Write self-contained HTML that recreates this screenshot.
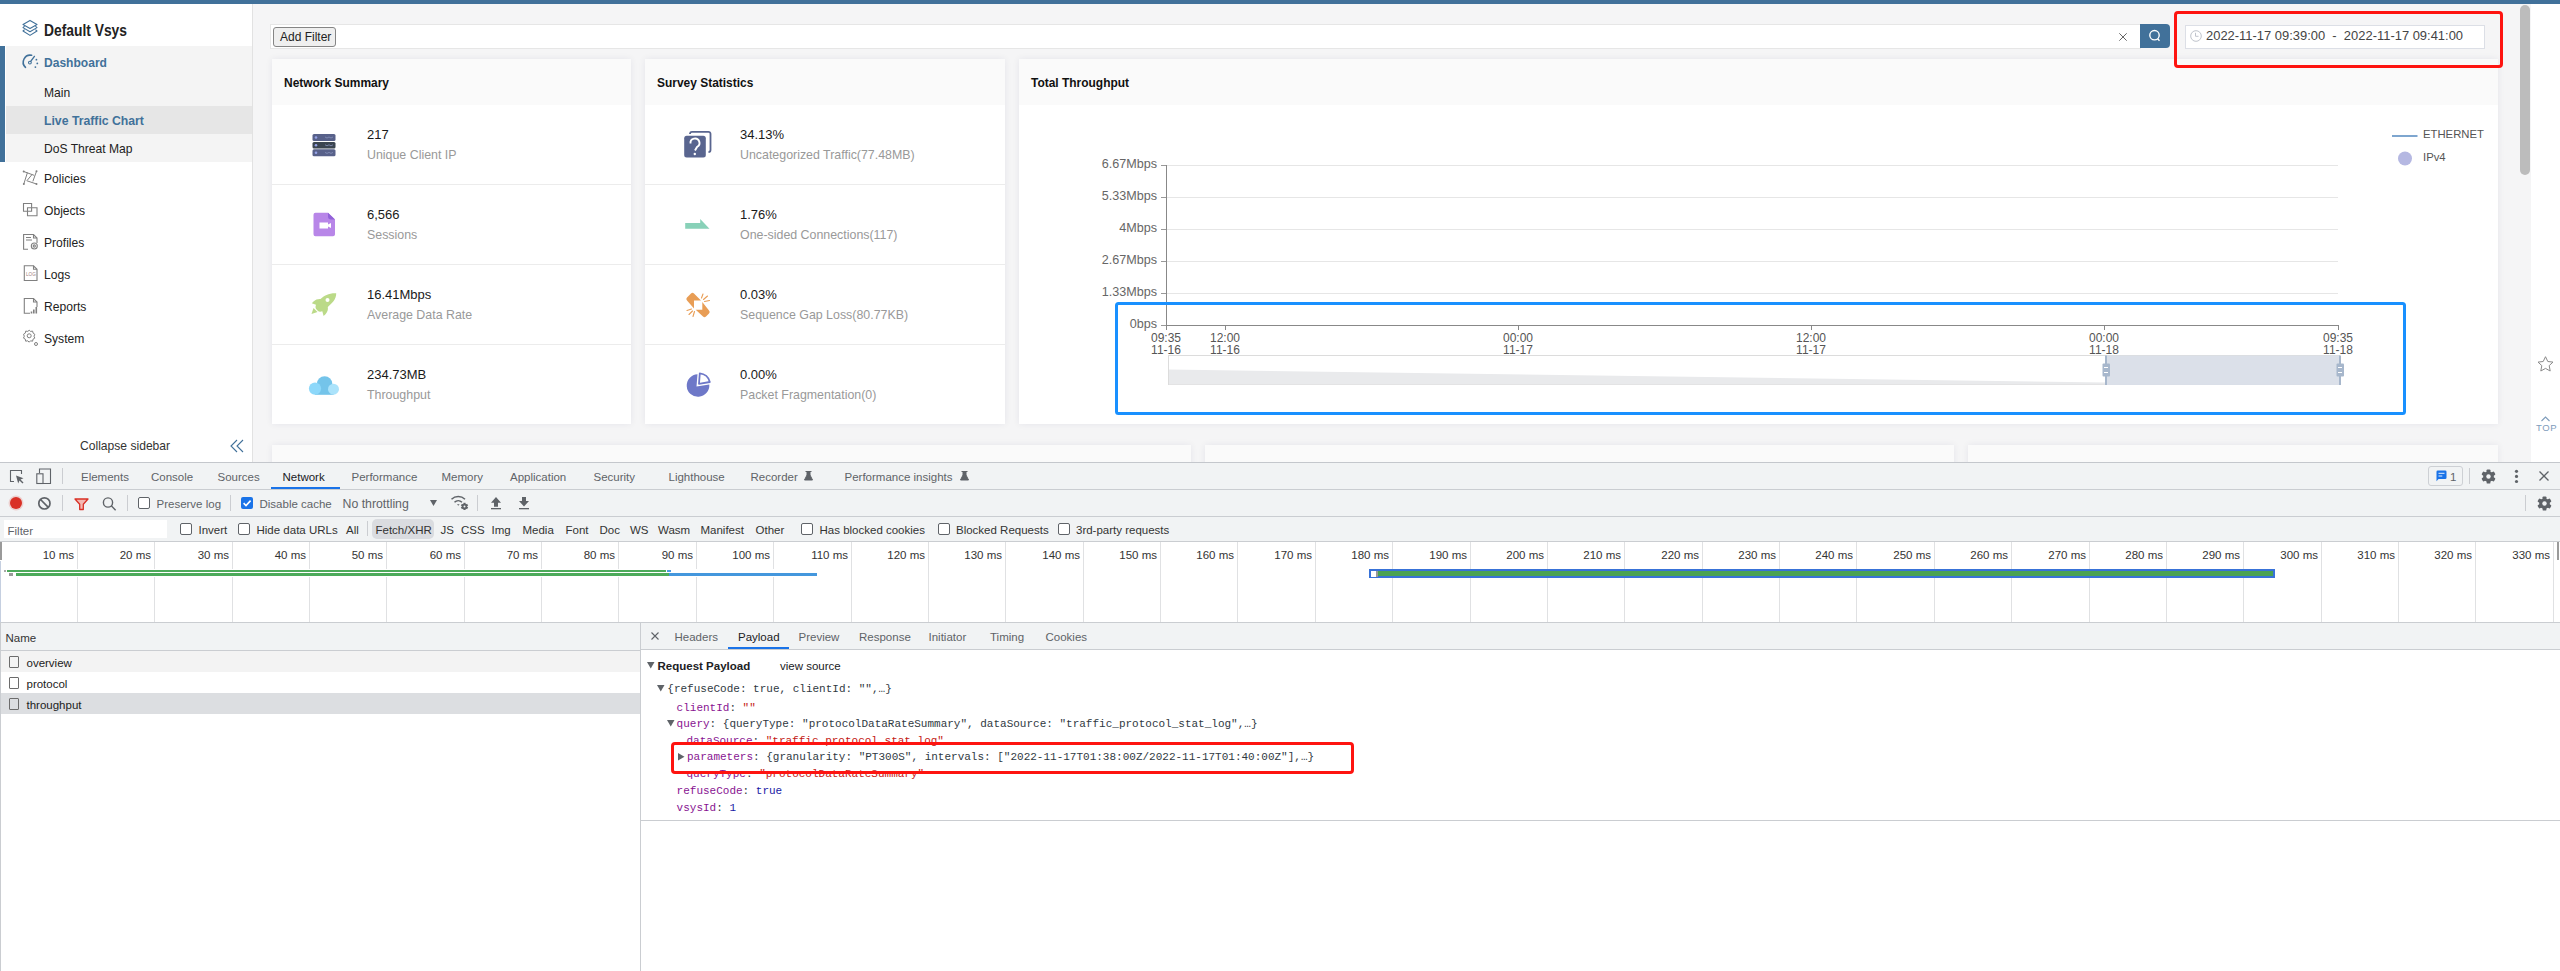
<!DOCTYPE html>
<html><head><meta charset="utf-8">
<style>
*{box-sizing:border-box;margin:0;padding:0}
html,body{width:2560px;height:971px;overflow:hidden;background:#fff;font-family:"Liberation Sans",sans-serif;color:#222}
.a{position:absolute}
.t{position:absolute;white-space:pre;line-height:20px;height:20px}
svg{position:absolute;overflow:visible}
/* app */
#topbar{left:0;top:0;width:2560px;height:4px;background:#41719a}
#side{left:0;top:4px;width:253px;height:458px;background:#fff;border-right:1px solid #e2e2e2}
#main{left:253px;top:4px;width:2278px;height:458px;background:#f5f5f6}
.card{position:absolute;background:#fff;box-shadow:0 0 7px rgba(30,30,80,0.07)}
.chead{position:absolute;left:0;top:0;right:0;height:46px;background:#fafafa}
.row{position:absolute;left:0;right:0;height:80px;border-top:1px solid #ececec}
.num{font-size:13px;color:#1a1a1a}
.lbl{font-size:12.4px;color:#999}
.side-t{font-size:12.1px;color:#222}
/* devtools */
#dev{left:0;top:462px;width:2560px;height:509px;background:#f1f3f4;border-top:1px solid #cbcdd1}
.dt{font-size:11.5px;color:#4d4d4d}
.cb{position:absolute;width:12px;height:12px;border:1px solid #5f6368;border-radius:2px;background:#fff}
.vsep{position:absolute;width:1px;background:#cbcdd1}
.mono{font-family:"Liberation Mono",monospace;font-size:11px;line-height:17px;height:17px}
</style></head><body>
<div id="topbar" class="a"></div>
<div id="side" class="a"></div>
<!-- sidebar -->
<svg style="left:22px;top:20px" width="16" height="16" viewBox="0 0 16 16" fill="none" stroke="#41719a" stroke-width="1.1" stroke-linejoin="round"><path d="M8 0.4L15 4.4L8 8.4L1 4.4Z"/><path d="M2.6 6.2L1 7.6L8 11.8L15 7.6L13.4 6.2"/><path d="M2.6 9.6L1 11L8 15.4L15 11L13.4 9.6"/></svg>
<div class="t" style="left:44px;top:20.5px;font-size:15.8px;font-weight:bold;color:#222;transform:scaleX(0.875);transform-origin:0 0">Default Vsys</div>
<div class="a" style="left:0;top:46px;width:5px;height:116px;background:#41719a"></div>
<div class="a" style="left:6px;top:46px;width:246px;height:116px;background:#f4f4f4"></div>
<div class="a" style="left:6px;top:106px;width:246px;height:28px;background:#e6e6e6"></div>
<svg style="left:21px;top:54px" width="18" height="16" viewBox="0 0 18 16" fill="none" stroke="#41719a" stroke-width="1.6" stroke-linecap="round"><path d="M4.5 13.3A7 7 0 0 1 10.6 1.3"/><path d="M9.7 7.3L13.4 2.4" stroke-width="1.4"/><circle cx="8.9" cy="8.6" r="1.4" stroke-width="1.1"/><g fill="#41719a" stroke="none"><circle cx="15.4" cy="5.7" r="0.9"/><circle cx="16.3" cy="9.4" r="0.9"/><circle cx="14.4" cy="13.1" r="0.9"/></g></svg>
<div class="t side-t" style="left:44px;top:53px;font-weight:bold;color:#41719a;font-size:12.06px">Dashboard</div>
<div class="t side-t" style="left:44px;top:83px">Main</div>
<div class="t side-t" style="left:44px;top:111px;font-weight:bold;color:#41719a;font-size:12.24px">Live Traffic Chart</div>
<div class="t side-t" style="left:44px;top:139px">DoS Threat Map</div>
<!-- other menu -->
<svg style="left:20px;top:168px" width="20" height="20" viewBox="0 0 20 20" fill="none" stroke="#808080" stroke-width="1" stroke-linecap="round"><path d="M3.7 3.5L13.8 7.2M16.5 3.3L13 13M16.5 16L7 12.8M3.8 16L7.3 5M7.5 12L11.8 6.8"/><g fill="#808080" stroke="none"><circle cx="3.7" cy="3.5" r="1"/><circle cx="16.5" cy="3.3" r="1"/><circle cx="16.5" cy="16" r="1"/><circle cx="3.8" cy="16" r="1"/></g></svg>
<div class="t side-t" style="left:44px;top:169px">Policies</div>
<svg style="left:20px;top:200px" width="20" height="20" viewBox="0 0 20 20" fill="none" stroke="#808080" stroke-width="1.1"><path d="M7.5 11.3H3.5V3.5H11.6V7.7"/><path d="M11.6 7.7V11.3H7.5"/><path d="M7.5 7.7H17V15.8H7.5Z"/></svg>
<div class="t side-t" style="left:44px;top:201px">Objects</div>
<svg style="left:20px;top:232px" width="20" height="20" viewBox="0 0 20 20" fill="none" stroke="#808080" stroke-width="1.1"><path d="M8 17.3H3.6V2.5H13.5L17 6V11"/><path d="M13.5 2.5V6H17"/><path d="M6 5.5H11M6 8H12"/><circle cx="14.3" cy="14" r="3"/><circle cx="14.3" cy="14" r="1.1"/></svg>
<div class="t side-t" style="left:44px;top:233px">Profiles</div>
<svg style="left:20px;top:264px" width="20" height="20" viewBox="0 0 20 20" fill="none" stroke="#808080" stroke-width="1.1"><path d="M4.3 1.8H13.5L17 5.3V16.5H4.3Z"/><path d="M13.5 1.8V5.3H17"/><text x="6" y="12" font-size="4.6" fill="#a08080" stroke="none" font-family="Liberation Sans">LOG</text></svg>
<div class="t side-t" style="left:44px;top:265px">Logs</div>
<svg style="left:20px;top:296px" width="20" height="20" viewBox="0 0 20 20" fill="none" stroke="#808080" stroke-width="1.1"><path d="M10 17.3H4.3V2.5H13.5L17 6V11"/><path d="M13.5 2.5V6H17"/><path d="M11.5 17.5V15.5M13.8 17.5V13.5M16.3 17.5V11" stroke-width="1.6"/></svg>
<div class="t side-t" style="left:44px;top:297px">Reports</div>
<svg style="left:20px;top:328px" width="20" height="20" viewBox="0 0 20 20" fill="none" stroke="#808080" stroke-width="1"><circle cx="9.2" cy="7.8" r="2"/><path d="M9.2 2.2L10.5 3.4L12.6 3.1L13.1 5.1L14.8 6.3L14 8.2L14.8 10.1L13 11.2L12.6 13.2L10.5 12.8L9.2 14.2L7.8 12.8L5.7 13.2L5.3 11.2L3.5 10.1L4.3 8.2L3.5 6.3L5.3 5.1L5.7 3.1L7.8 3.4Z"/><circle cx="16" cy="16" r="1.5"/></svg>
<div class="t side-t" style="left:44px;top:329px">System</div>
<div class="t side-t" style="left:80px;top:436px;color:#333">Collapse sidebar</div>
<svg style="left:230px;top:439px" width="14" height="14" viewBox="0 0 14 14" fill="none" stroke="#41719a" stroke-width="1.1"><path d="M7 1L1 7L7 13M13 1L7 7L13 13"/></svg>
<div id="main" class="a"></div>
<div class="a" style="left:2531px;top:4px;width:28px;height:458px;background:#fff"></div>
<div class="a" style="left:2520px;top:5px;width:10px;height:170px;background:#bcbcbc;border-radius:5px"></div>
<!-- filter bar -->
<div class="a" style="left:270px;top:24px;width:1871px;height:25px;background:#fff;border:1px solid #e6e6e6;border-right:none"></div>
<div class="a" style="left:273px;top:27px;width:63px;height:20px;background:#efefef;border:1.5px solid #858585;border-radius:3px"></div>
<div class="t" style="left:280px;top:27px;font-size:12px;color:#222">Add Filter</div>
<svg style="left:2119px;top:33px" width="8" height="8" viewBox="0 0 8 8" stroke="#666" stroke-width="1"><path d="M0.3 0.3L7.7 7.7M7.7 0.3L0.3 7.7"/></svg>
<div class="a" style="left:2140px;top:24px;width:30px;height:24px;background:#41719a;border-radius:0 4px 4px 0"></div>
<svg style="left:2148px;top:29px" width="14" height="14" viewBox="0 0 14 14" fill="none" stroke="#fff" stroke-width="1.4"><circle cx="6.5" cy="6.2" r="4.7"/><path d="M9.6 9.8L11.5 11.8"/></svg>
<!-- date range -->
<div class="a" style="left:2185px;top:25px;width:300px;height:24px;background:#fff;border:1px solid #dcdfe6"></div>
<svg style="left:2190px;top:30px" width="12" height="12" viewBox="0 0 12 12" fill="none" stroke="#c0c4cc" stroke-width="1"><circle cx="6" cy="6" r="5.3"/><path d="M5.5 2.8V6.3H8.5"/></svg>
<div class="t" style="left:2206px;top:26px;font-size:12.94px;color:#444">2022-11-17 09:39:00  -  2022-11-17 09:41:00</div>

<!-- card 1 -->
<div class="card" style="left:272px;top:59px;width:359px;height:365px">
 <div class="chead"></div>
 <div class="row" style="top:125px"></div><div class="row" style="top:205px"></div><div class="row" style="top:285px"></div>
</div>
<div class="t" style="left:284px;top:73px;font-size:11.96px;font-weight:bold;color:#111">Network Summary</div>
<svg style="left:312px;top:134px" width="24" height="23" viewBox="0 0 24 23"><rect x="0.5" y="0" width="23" height="7" rx="1.5" fill="#58618a"/><rect x="0.5" y="8" width="23" height="6.5" rx="1.5" fill="#3b4550"/><rect x="0.5" y="15.3" width="23" height="7" rx="1.5" fill="#58618a"/><circle cx="4" cy="3.5" r="1.3" fill="#95a2e6"/><circle cx="4" cy="11.2" r="1.3" fill="#95a2e6"/><circle cx="4" cy="18.8" r="1.3" fill="#95a2e6"/><path d="M13 3L15 4L17 3L19 4L21 3M13 10.8L15 11.8L17 10.8L19 11.8L21 10.8M13 18.4L15 19.4L17 18.4L19 19.4L21 18.4" stroke="#8892bb" stroke-width="0.8" fill="none"/></svg>
<div class="t num" style="left:367px;top:125px">217</div>
<div class="t lbl" style="left:367px;top:145px">Unique Client IP</div>
<svg style="left:313px;top:212px" width="23" height="25" viewBox="0 0 23 25"><path d="M2.5 0.8H15L22 7.5V22.5A2 2 0 0 1 20 24.3H2.5A2 2 0 0 1 0.5 22.3V2.8A2 2 0 0 1 2.5 0.8Z" fill="#b886e8"/><path d="M15 0.8L22 7.5H18A3 3 0 0 1 15 4.5Z" fill="#9262d8"/><rect x="6.5" y="10.5" width="8.5" height="6" fill="#fff"/><path d="M15 12.5L18 11V16L15 14.5Z" fill="#fff"/></svg>
<div class="t num" style="left:367px;top:205px">6,566</div>
<div class="t lbl" style="left:367px;top:225px">Sessions</div>
<svg style="left:311px;top:292px" width="26" height="25" viewBox="0 0 26 25"><path d="M25.2 1.2C18.5 0.8 13 3.5 9.5 7C7 6.8 4.5 7.5 2.5 9.5L0.8 11.2L5 12.8C4.2 14.8 4.4 16.4 5.8 17.8L6.5 18.5C7.9 19.9 9.4 20.1 11.3 19.3L12.6 24L14.5 22.2C16.5 20.2 17.3 17.6 16.8 15C21 11.2 25.5 7 25.2 1.2Z" fill="#bbda88"/><circle cx="16.5" cy="8" r="2" fill="#fff"/><path d="M2.5 16L6.5 20L0.5 22Z" fill="#bbda88"/></svg>
<div class="t num" style="left:367px;top:285px">16.41Mbps</div>
<div class="t lbl" style="left:367px;top:305px">Average Data Rate</div>
<svg style="left:309px;top:376px" width="30" height="19" viewBox="0 0 30 19"><circle cx="15.6" cy="8" r="7.8" fill="#74c4ea"/><rect x="6" y="12" width="18.7" height="6.8" fill="#74c4ea"/><circle cx="6" cy="12.6" r="6.1" fill="#8dd8fa"/><circle cx="24.5" cy="13.2" r="5.5" fill="#abe3fb"/></svg>
<div class="t num" style="left:367px;top:365px">234.73MB</div>
<div class="t lbl" style="left:367px;top:385px">Throughput</div>
<!-- card 2 -->
<div class="card" style="left:645px;top:59px;width:360px;height:365px">
 <div class="chead"></div>
 <div class="row" style="top:125px"></div><div class="row" style="top:205px"></div><div class="row" style="top:285px"></div>
</div>
<div class="t" style="left:657px;top:73px;font-size:11.96px;font-weight:bold;color:#111">Survey Statistics</div>
<svg style="left:684px;top:131px" width="27" height="27" viewBox="0 0 27 27"><path d="M6 3V2.5A2 2 0 0 1 8 0.8H24.5A2 2 0 0 1 26.5 2.8V19A2 2 0 0 1 24.5 21" fill="none" stroke="#59658f" stroke-width="1.8"/><rect x="0.2" y="4.8" width="21.6" height="21.8" rx="2.5" fill="#59658f"/><path d="M6.5 12.5A4.5 4.5 0 1 1 13 16L11 19.5" fill="none" stroke="#fff" stroke-width="1.9"/><circle cx="10.8" cy="23" r="1.2" fill="#fff"/></svg>
<div class="t num" style="left:740px;top:125px">34.13%</div>
<div class="t lbl" style="left:740px;top:145px">Uncategorized Traffic(77.48MB)</div>
<svg style="left:685px;top:219px" width="25" height="10" viewBox="0 0 25 10"><path d="M0.2 4H15.2V0L24.5 9.7H0.2Z" fill="#88d1b8"/></svg>
<div class="t num" style="left:740px;top:205px">1.76%</div>
<div class="t lbl" style="left:740px;top:225px">One-sided Connections(117)</div>
<svg style="left:678px;top:285px" width="40" height="40" viewBox="0 0 40 40"><path d="M9 12.5L13 8.5Q14.5 7 16 8.5L23 15.5H16V23.5L9 15.5Q7.5 14 9 12.5Z" fill="#e89d55"/><path d="M24.3 17V24.7H17.7L25 31.5Q26.5 33 28 31.5L31 28.5Q32.5 27 31 25.5Z" fill="#e89d55"/><path d="M23.5 13L25 9M25.5 14.5L29.5 11M26.5 16.5L31.5 15.5M9 25.5L13.5 24M11 29.5L14.5 26M15 31.5L16.5 26.5" stroke="#e89d55" stroke-width="1.1" stroke-linecap="round"/></svg>
<div class="t num" style="left:740px;top:285px">0.03%</div>
<div class="t lbl" style="left:740px;top:305px">Sequence Gap Loss(80.77KB)</div>
<svg style="left:678px;top:365px" width="40" height="40" viewBox="0 0 40 40"><path d="M19.5 9.2A11.3 11.3 0 1 0 31.3 19.6L18.5 21.5Z" fill="#6e78c8"/><path d="M21.8 8.3A11.3 11.3 0 0 1 31.8 17L21 18.8Z" fill="none" stroke="#6e78c8" stroke-width="1.8" stroke-linejoin="round"/></svg>
<div class="t num" style="left:740px;top:365px">0.00%</div>
<div class="t lbl" style="left:740px;top:385px">Packet Fragmentation(0)</div>
<!-- card 3 chart -->
<div class="card" style="left:1019px;top:59px;width:1479px;height:365px"><div class="chead"></div></div>
<div class="t" style="left:1031px;top:73px;font-size:11.96px;font-weight:bold;color:#111">Total Throughput</div>
<svg style="left:0;top:0" width="2560" height="462" viewBox="0 0 2560 462"><path d="M1167 165.5H2338" stroke="#e6e6e6" stroke-width="1"/><path d="M1167 197.5H2338" stroke="#e6e6e6" stroke-width="1"/><path d="M1167 229.5H2338" stroke="#e6e6e6" stroke-width="1"/><path d="M1167 261.5H2338" stroke="#e6e6e6" stroke-width="1"/><path d="M1167 293.5H2338" stroke="#e6e6e6" stroke-width="1"/><path d="M1161 165.5H1166" stroke="#999" stroke-width="1"/><path d="M1161 197.5H1166" stroke="#999" stroke-width="1"/><path d="M1161 229.5H1166" stroke="#999" stroke-width="1"/><path d="M1161 261.5H1166" stroke="#999" stroke-width="1"/><path d="M1161 293.5H1166" stroke="#999" stroke-width="1"/><path d="M1161 325.5H1166" stroke="#999" stroke-width="1"/><path d="M1166.5 165V330" stroke="#888" stroke-width="1"/><path d="M1166 325.5H2338.5" stroke="#888" stroke-width="1"/><path d="M1166.5 325V330" stroke="#888" stroke-width="1"/><path d="M1225.5 325V330" stroke="#888" stroke-width="1"/><path d="M1518.5 325V330" stroke="#888" stroke-width="1"/><path d="M1811.5 325V330" stroke="#888" stroke-width="1"/><path d="M2104.5 325V330" stroke="#888" stroke-width="1"/><path d="M2338.5 325V330" stroke="#888" stroke-width="1"/><rect x="1168.5" y="355.5" width="1171" height="29" fill="#fff" stroke="#dcdcdc" stroke-width="1"/><path d="M1169 369.5L2106 382.5V384.5H1169Z" fill="#e9eaec"/><rect x="2106" y="355.5" width="234" height="29.5" fill="#d9dee8" fill-opacity="0.95"/><rect x="2105" y="355.5" width="2" height="29.5" fill="#a7b7cc"/><rect x="2102.5" y="363.5" width="7.5" height="13" rx="1" fill="#a7b7cc"/><path d="M2104 367.5H2108M2104 372.5H2108" stroke="#fff" stroke-width="1"/><rect x="2339" y="355.5" width="2" height="29.5" fill="#a7b7cc"/><rect x="2336.5" y="363.5" width="7.5" height="13" rx="1" fill="#a7b7cc"/><path d="M2338 367.5H2342M2338 372.5H2342" stroke="#fff" stroke-width="1"/><path d="M2392 136H2417.5" stroke="#7ea6cf" stroke-width="2"/><circle cx="2405" cy="158.5" r="7" fill="#b5b8e2"/><rect x="1116.5" y="303.5" width="1288" height="110" rx="2" fill="none" stroke="#1890ff" stroke-width="3"/></svg>
<div class="t" style="left:1057px;width:100px;text-align:right;top:154px;font-size:12.6px;color:#666">6.67Mbps</div>
<div class="t" style="left:1057px;width:100px;text-align:right;top:186px;font-size:12.6px;color:#666">5.33Mbps</div>
<div class="t" style="left:1057px;width:100px;text-align:right;top:218px;font-size:12.6px;color:#666">4Mbps</div>
<div class="t" style="left:1057px;width:100px;text-align:right;top:250px;font-size:12.6px;color:#666">2.67Mbps</div>
<div class="t" style="left:1057px;width:100px;text-align:right;top:282px;font-size:12.6px;color:#666">1.33Mbps</div>
<div class="t" style="left:1057px;width:100px;text-align:right;top:314px;font-size:12.6px;color:#666">0bps</div>
<div class="t" style="left:1126px;width:80px;text-align:center;top:332px;font-size:12px;line-height:12px;color:#555">09:35<br>11-16</div>
<div class="t" style="left:1185px;width:80px;text-align:center;top:332px;font-size:12px;line-height:12px;color:#555">12:00<br>11-16</div>
<div class="t" style="left:1478px;width:80px;text-align:center;top:332px;font-size:12px;line-height:12px;color:#555">00:00<br>11-17</div>
<div class="t" style="left:1771px;width:80px;text-align:center;top:332px;font-size:12px;line-height:12px;color:#555">12:00<br>11-17</div>
<div class="t" style="left:2064px;width:80px;text-align:center;top:332px;font-size:12px;line-height:12px;color:#555">00:00<br>11-18</div>
<div class="t" style="left:2298px;width:80px;text-align:center;top:332px;font-size:12px;line-height:12px;color:#555">09:35<br>11-18</div>
<div class="t" style="left:2423px;top:124px;font-size:11.3px;color:#555">ETHERNET</div>
<div class="t" style="left:2423px;top:147px;font-size:11.3px;color:#555">IPv4</div>
<div class="a" style="left:2174px;top:11px;width:329px;height:57px;border:3px solid #fe1410;border-radius:4px"></div>
<!-- next row cards -->
<div class="card" style="left:272px;top:445px;width:919px;height:30px;background:#fafafa"></div>
<div class="card" style="left:1205px;top:445px;width:749px;height:30px;background:#fafafa"></div>
<div class="card" style="left:1968px;top:445px;width:530px;height:30px;background:#fafafa"></div>
<svg style="left:2537px;top:356px" width="17" height="16" viewBox="0 0 17 16" fill="none" stroke="#8a8a8a" stroke-width="1" stroke-linejoin="round"><path d="M8.5 0.7L10.8 5.5L16 6.1L12.2 9.6L13.2 15L8.5 12.4L3.8 15L4.8 9.6L1 6.1L6.2 5.5Z"/></svg>
<svg style="left:2536px;top:416px" width="20" height="16" viewBox="0 0 20 16" fill="none" stroke="#7e9cbb" stroke-width="1.1"><path d="M5.5 5L9.5 1L13.5 5"/></svg>
<div class="t" style="left:2536px;top:418px;font-size:9.5px;line-height:20px;letter-spacing:0.6px;color:#7e9cbb">TOP</div>

<div id="dev" class="a"></div>
<div class="a" style="left:0;top:462px;width:2560px;height:1px;background:#c4c7cc"></div>
<div class="a" style="left:0;top:489px;width:2560px;height:1px;background:#cacdd1"></div>
<div class="a" style="left:0;top:516px;width:2560px;height:1px;background:#cacdd1"></div>
<div class="a" style="left:0;top:541px;width:2560px;height:1px;background:#cacdd1"></div>
<svg style="left:9px;top:469px" width="16" height="15" viewBox="0 0 16 15" fill="none" stroke="#5f6368" stroke-width="1.1"><path d="M5 12.5H1.5V1.5H12.5V5"/><path d="M7 6.5L14.5 9.2L11.5 10.5L14.5 13.5L13.5 14.5L10.5 11.5L9.2 14.5Z" fill="#5f6368" stroke="none"/></svg>
<svg style="left:36px;top:468px" width="16" height="16" viewBox="0 0 16 16" fill="none" stroke="#5f6368" stroke-width="1.1"><path d="M3.5 5V1H14.5V15.5H7"/><rect x="0.8" y="5.8" width="6.2" height="9.7"/></svg>
<div class="vsep" style="left:62px;top:468px;height:16px"></div>
<div class="t" style="left:81px;top:467px;font-size:11.5px;color:#5f6368;">Elements</div>
<div class="t" style="left:151px;top:467px;font-size:11.5px;color:#5f6368;">Console</div>
<div class="t" style="left:217.5px;top:467px;font-size:11.5px;color:#5f6368;">Sources</div>
<div class="t" style="left:282.5px;top:467px;font-size:11.5px;color:#202124;">Network</div>
<div class="t" style="left:351.5px;top:467px;font-size:11.5px;color:#5f6368;">Performance</div>
<div class="t" style="left:441.5px;top:467px;font-size:11.5px;color:#5f6368;">Memory</div>
<div class="t" style="left:510px;top:467px;font-size:11.5px;color:#5f6368;">Application</div>
<div class="t" style="left:593.5px;top:467px;font-size:11.5px;color:#5f6368;">Security</div>
<div class="t" style="left:668.5px;top:467px;font-size:11.5px;color:#5f6368;">Lighthouse</div>
<div class="t" style="left:750.5px;top:467px;font-size:11.5px;color:#5f6368;">Recorder</div>
<div class="t" style="left:844.5px;top:467px;font-size:11.5px;color:#5f6368;">Performance insights</div>
<div class="a" style="left:271px;top:487px;width:69px;height:2px;background:#1a73e8"></div>
<svg style="left:803.5px;top:471px" width="9" height="10" viewBox="0 0 9 10"><path d="M1.5 0.5H7.5M3 1V4L0.5 9H8.5L6 4V1" fill="#5f6368" stroke="#5f6368" stroke-width="1"/></svg>
<svg style="left:960px;top:471px" width="9" height="10" viewBox="0 0 9 10"><path d="M1.5 0.5H7.5M3 1V4L0.5 9H8.5L6 4V1" fill="#5f6368" stroke="#5f6368" stroke-width="1"/></svg>
<div class="a" style="left:2428px;top:466px;width:35px;height:20px;border:1px solid #cdd0d4;border-radius:3px"></div>
<svg style="left:2435.5px;top:470px" width="11" height="12" viewBox="0 0 11 12"><path d="M1.8 0.5H9.2A1.3 1.3 0 0 1 10.5 1.8V7.7A1.3 1.3 0 0 1 9.2 9H2.5L0.5 11.3V1.8A1.3 1.3 0 0 1 1.8 0.5Z" fill="#1a73e8"/><path d="M2.5 3.3H8.5M2.5 6H6.3" stroke="#fff" stroke-width="0.9"/></svg>
<div class="t" style="left:2450px;top:466.5px;font-size:11.5px;color:#5f6368;">1</div>
<div class="vsep" style="left:2469px;top:468px;height:16px"></div>
<svg style="left:2480.5px;top:468.5px" width="15" height="15" viewBox="0 0 15 15"><g transform="translate(7.5 7.5)" fill="#5f6368"><rect x="-1.9" y="-7.1" width="3.8" height="4" rx="0.9" transform="rotate(0)"/><rect x="-1.9" y="-7.1" width="3.8" height="4" rx="0.9" transform="rotate(60)"/><rect x="-1.9" y="-7.1" width="3.8" height="4" rx="0.9" transform="rotate(120)"/><rect x="-1.9" y="-7.1" width="3.8" height="4" rx="0.9" transform="rotate(180)"/><rect x="-1.9" y="-7.1" width="3.8" height="4" rx="0.9" transform="rotate(240)"/><rect x="-1.9" y="-7.1" width="3.8" height="4" rx="0.9" transform="rotate(300)"/><circle r="5.3"/><circle r="2.2" fill="#f1f3f4"/></g></svg>
<svg style="left:2514px;top:469px" width="5" height="15" viewBox="0 0 5 15" fill="#5f6368"><circle cx="2.5" cy="2.3" r="1.6"/><circle cx="2.5" cy="7.4" r="1.6"/><circle cx="2.5" cy="12.5" r="1.6"/></svg>
<svg style="left:2539px;top:471px" width="10" height="10" viewBox="0 0 10 10" stroke="#5f6368" stroke-width="1.3"><path d="M0.5 0.5L9.5 9.5M9.5 0.5L0.5 9.5"/></svg>
<svg style="left:7px;top:494px" width="18" height="18" viewBox="0 0 18 18"><circle cx="9" cy="9" r="7.5" fill="#d93025" fill-opacity="0.18"/><circle cx="9" cy="9" r="6" fill="#d93025"/></svg>
<svg style="left:37px;top:496px" width="15" height="15" viewBox="0 0 15 15" fill="none" stroke="#5f6368" stroke-width="1.7"><circle cx="7.4" cy="7.4" r="5.6"/><path d="M3.5 3.5L11.3 11.3"/></svg>
<div class="vsep" style="left:62px;top:495px;height:16px"></div>
<svg style="left:73.5px;top:497.5px" width="15" height="13" viewBox="0 0 15 13"><path d="M1 1H14L9.3 6.3V11.5H5.7V6.3Z" fill="#f4b8b2" stroke="#d93025" stroke-width="1.3" stroke-linejoin="round"/></svg>
<svg style="left:101px;top:496px" width="16" height="16" viewBox="0 0 16 16" fill="none" stroke="#5f6368" stroke-width="1.4"><circle cx="7" cy="6.5" r="4.6"/><path d="M10.3 9.8L14.6 14.2"/></svg>
<div class="vsep" style="left:127px;top:495px;height:16px"></div>
<div class="cb" style="left:138px;top:497px"></div>
<div class="t" style="left:156.5px;top:493.5px;font-size:11.5px;color:#5f6368;">Preserve log</div>
<div class="vsep" style="left:230px;top:495px;height:16px"></div>
<svg style="left:241px;top:497px" width="12" height="12" viewBox="0 0 12 12"><rect x="0" y="0" width="12" height="12" rx="2" fill="#1a73e8"/><path d="M2.6 6.2L5 8.5L9.6 3.6" fill="none" stroke="#fff" stroke-width="1.6"/></svg>
<div class="t" style="left:259.5px;top:493.5px;font-size:11.5px;color:#5f6368;">Disable cache</div>
<div class="t" style="left:342.5px;top:493.5px;font-size:12.3px;color:#5f6368;">No throttling</div>
<svg style="left:430px;top:500px" width="7" height="6" viewBox="0 0 7 6"><path d="M0 0H7L3.5 6Z" fill="#5f6368"/></svg>
<svg style="left:450px;top:495px" width="20" height="16" viewBox="0 0 20 16"><path d="M1.5 4.2A10 10 0 0 1 15 4.2M4.5 7.3A5.5 5.5 0 0 1 12 7.3" fill="none" stroke="#5f6368" stroke-width="1.5"/><path d="M7 9.3L8.3 10.8L9.6 9.3Z" fill="#5f6368"/><g transform="translate(14.5 11.4)" fill="#5f6368"><rect x="-1.1" y="-3.6" width="2.2" height="2" transform="rotate(0)"/><rect x="-1.1" y="-3.6" width="2.2" height="2" transform="rotate(60)"/><rect x="-1.1" y="-3.6" width="2.2" height="2" transform="rotate(120)"/><rect x="-1.1" y="-3.6" width="2.2" height="2" transform="rotate(180)"/><rect x="-1.1" y="-3.6" width="2.2" height="2" transform="rotate(240)"/><rect x="-1.1" y="-3.6" width="2.2" height="2" transform="rotate(300)"/><circle r="2.6"/><circle r="1" fill="#f1f3f4"/></g></svg>
<div class="vsep" style="left:477px;top:495px;height:16px"></div>
<svg style="left:490px;top:496px" width="12" height="14" viewBox="0 0 12 14" fill="#5f6368"><path d="M6 1L11 6.8H8V10.8H4V6.8H1Z"/><rect x="1" y="12" width="10" height="1.3"/></svg>
<svg style="left:518px;top:496px" width="12" height="14" viewBox="0 0 12 14" fill="#5f6368"><path d="M4 1H8V5.1H11L6 10.6L1 5.1H4Z"/><rect x="1" y="12" width="10" height="1.3"/></svg>
<div class="vsep" style="left:2525px;top:495px;height:16px"></div>
<svg style="left:2536.5px;top:495.5px" width="15" height="15" viewBox="0 0 15 15"><g transform="translate(7.5 7.5)" fill="#5f6368"><rect x="-1.9" y="-7.1" width="3.8" height="4" rx="0.9" transform="rotate(0)"/><rect x="-1.9" y="-7.1" width="3.8" height="4" rx="0.9" transform="rotate(60)"/><rect x="-1.9" y="-7.1" width="3.8" height="4" rx="0.9" transform="rotate(120)"/><rect x="-1.9" y="-7.1" width="3.8" height="4" rx="0.9" transform="rotate(180)"/><rect x="-1.9" y="-7.1" width="3.8" height="4" rx="0.9" transform="rotate(240)"/><rect x="-1.9" y="-7.1" width="3.8" height="4" rx="0.9" transform="rotate(300)"/><circle r="5.3"/><circle r="2.2" fill="#f1f3f4"/></g></svg>
<div class="a" style="left:4px;top:520px;width:163px;height:18px;background:#fff"></div>
<div class="t" style="left:7.5px;top:520.5px;font-size:11.5px;color:#5f6368;">Filter</div>
<div class="cb" style="left:180px;top:523px"></div>
<div class="t" style="left:198.5px;top:519.5px;font-size:11.5px;color:#333;">Invert</div>
<div class="cb" style="left:238px;top:523px"></div>
<div class="t" style="left:256.5px;top:519.5px;font-size:11.5px;color:#333;">Hide data URLs</div>
<div class="t" style="left:346px;top:519.5px;font-size:11.5px;color:#333;">All</div>
<div class="vsep" style="left:367px;top:521px;height:15px"></div>
<div class="a" style="left:372px;top:519px;width:62px;height:19.5px;background:#dadce0;border-radius:5px"></div>
<div class="t" style="left:375.5px;top:519.5px;font-size:11.5px;color:#333;">Fetch/XHR</div>
<div class="t" style="left:440.5px;top:519.5px;font-size:11.5px;color:#333;">JS</div>
<div class="t" style="left:461px;top:519.5px;font-size:11.5px;color:#333;">CSS</div>
<div class="t" style="left:491.5px;top:519.5px;font-size:11.5px;color:#333;">Img</div>
<div class="t" style="left:522.5px;top:519.5px;font-size:11.5px;color:#333;">Media</div>
<div class="t" style="left:565.5px;top:519.5px;font-size:11.5px;color:#333;">Font</div>
<div class="t" style="left:599.5px;top:519.5px;font-size:11.5px;color:#333;">Doc</div>
<div class="t" style="left:630px;top:519.5px;font-size:11.5px;color:#333;">WS</div>
<div class="t" style="left:658px;top:519.5px;font-size:11.5px;color:#333;">Wasm</div>
<div class="t" style="left:700.5px;top:519.5px;font-size:11.5px;color:#333;">Manifest</div>
<div class="t" style="left:755.5px;top:519.5px;font-size:11.5px;color:#333;">Other</div>
<div class="cb" style="left:801px;top:523px"></div>
<div class="t" style="left:819.5px;top:519.5px;font-size:11.5px;color:#333;">Has blocked cookies</div>
<div class="cb" style="left:937.5px;top:523px"></div>
<div class="t" style="left:956.0px;top:519.5px;font-size:11.5px;color:#333;">Blocked Requests</div>
<div class="cb" style="left:1057.5px;top:523px"></div>
<div class="t" style="left:1076.0px;top:519.5px;font-size:11.5px;color:#333;">3rd-party requests</div>
<div class="a" style="left:0;top:542px;width:2560px;height:80px;background:#fff"></div>
<div class="a" style="left:77px;top:542px;width:1px;height:80px;background:#e0e1e3"></div>
<div class="t" style="left:-3px;width:77px;text-align:right;top:544.5px;font-size:11.5px;color:#333">10 ms</div>
<div class="a" style="left:154px;top:542px;width:1px;height:80px;background:#e0e1e3"></div>
<div class="t" style="left:74px;width:77px;text-align:right;top:544.5px;font-size:11.5px;color:#333">20 ms</div>
<div class="a" style="left:232px;top:542px;width:1px;height:80px;background:#e0e1e3"></div>
<div class="t" style="left:152px;width:77px;text-align:right;top:544.5px;font-size:11.5px;color:#333">30 ms</div>
<div class="a" style="left:309px;top:542px;width:1px;height:80px;background:#e0e1e3"></div>
<div class="t" style="left:229px;width:77px;text-align:right;top:544.5px;font-size:11.5px;color:#333">40 ms</div>
<div class="a" style="left:386px;top:542px;width:1px;height:80px;background:#e0e1e3"></div>
<div class="t" style="left:306px;width:77px;text-align:right;top:544.5px;font-size:11.5px;color:#333">50 ms</div>
<div class="a" style="left:464px;top:542px;width:1px;height:80px;background:#e0e1e3"></div>
<div class="t" style="left:384px;width:77px;text-align:right;top:544.5px;font-size:11.5px;color:#333">60 ms</div>
<div class="a" style="left:541px;top:542px;width:1px;height:80px;background:#e0e1e3"></div>
<div class="t" style="left:461px;width:77px;text-align:right;top:544.5px;font-size:11.5px;color:#333">70 ms</div>
<div class="a" style="left:618px;top:542px;width:1px;height:80px;background:#e0e1e3"></div>
<div class="t" style="left:538px;width:77px;text-align:right;top:544.5px;font-size:11.5px;color:#333">80 ms</div>
<div class="a" style="left:696px;top:542px;width:1px;height:80px;background:#e0e1e3"></div>
<div class="t" style="left:616px;width:77px;text-align:right;top:544.5px;font-size:11.5px;color:#333">90 ms</div>
<div class="a" style="left:773px;top:542px;width:1px;height:80px;background:#e0e1e3"></div>
<div class="t" style="left:693px;width:77px;text-align:right;top:544.5px;font-size:11.5px;color:#333">100 ms</div>
<div class="a" style="left:851px;top:542px;width:1px;height:80px;background:#e0e1e3"></div>
<div class="t" style="left:771px;width:77px;text-align:right;top:544.5px;font-size:11.5px;color:#333">110 ms</div>
<div class="a" style="left:928px;top:542px;width:1px;height:80px;background:#e0e1e3"></div>
<div class="t" style="left:848px;width:77px;text-align:right;top:544.5px;font-size:11.5px;color:#333">120 ms</div>
<div class="a" style="left:1005px;top:542px;width:1px;height:80px;background:#e0e1e3"></div>
<div class="t" style="left:925px;width:77px;text-align:right;top:544.5px;font-size:11.5px;color:#333">130 ms</div>
<div class="a" style="left:1083px;top:542px;width:1px;height:80px;background:#e0e1e3"></div>
<div class="t" style="left:1003px;width:77px;text-align:right;top:544.5px;font-size:11.5px;color:#333">140 ms</div>
<div class="a" style="left:1160px;top:542px;width:1px;height:80px;background:#e0e1e3"></div>
<div class="t" style="left:1080px;width:77px;text-align:right;top:544.5px;font-size:11.5px;color:#333">150 ms</div>
<div class="a" style="left:1237px;top:542px;width:1px;height:80px;background:#e0e1e3"></div>
<div class="t" style="left:1157px;width:77px;text-align:right;top:544.5px;font-size:11.5px;color:#333">160 ms</div>
<div class="a" style="left:1315px;top:542px;width:1px;height:80px;background:#e0e1e3"></div>
<div class="t" style="left:1235px;width:77px;text-align:right;top:544.5px;font-size:11.5px;color:#333">170 ms</div>
<div class="a" style="left:1392px;top:542px;width:1px;height:80px;background:#e0e1e3"></div>
<div class="t" style="left:1312px;width:77px;text-align:right;top:544.5px;font-size:11.5px;color:#333">180 ms</div>
<div class="a" style="left:1470px;top:542px;width:1px;height:80px;background:#e0e1e3"></div>
<div class="t" style="left:1390px;width:77px;text-align:right;top:544.5px;font-size:11.5px;color:#333">190 ms</div>
<div class="a" style="left:1547px;top:542px;width:1px;height:80px;background:#e0e1e3"></div>
<div class="t" style="left:1467px;width:77px;text-align:right;top:544.5px;font-size:11.5px;color:#333">200 ms</div>
<div class="a" style="left:1624px;top:542px;width:1px;height:80px;background:#e0e1e3"></div>
<div class="t" style="left:1544px;width:77px;text-align:right;top:544.5px;font-size:11.5px;color:#333">210 ms</div>
<div class="a" style="left:1702px;top:542px;width:1px;height:80px;background:#e0e1e3"></div>
<div class="t" style="left:1622px;width:77px;text-align:right;top:544.5px;font-size:11.5px;color:#333">220 ms</div>
<div class="a" style="left:1779px;top:542px;width:1px;height:80px;background:#e0e1e3"></div>
<div class="t" style="left:1699px;width:77px;text-align:right;top:544.5px;font-size:11.5px;color:#333">230 ms</div>
<div class="a" style="left:1856px;top:542px;width:1px;height:80px;background:#e0e1e3"></div>
<div class="t" style="left:1776px;width:77px;text-align:right;top:544.5px;font-size:11.5px;color:#333">240 ms</div>
<div class="a" style="left:1934px;top:542px;width:1px;height:80px;background:#e0e1e3"></div>
<div class="t" style="left:1854px;width:77px;text-align:right;top:544.5px;font-size:11.5px;color:#333">250 ms</div>
<div class="a" style="left:2011px;top:542px;width:1px;height:80px;background:#e0e1e3"></div>
<div class="t" style="left:1931px;width:77px;text-align:right;top:544.5px;font-size:11.5px;color:#333">260 ms</div>
<div class="a" style="left:2089px;top:542px;width:1px;height:80px;background:#e0e1e3"></div>
<div class="t" style="left:2009px;width:77px;text-align:right;top:544.5px;font-size:11.5px;color:#333">270 ms</div>
<div class="a" style="left:2166px;top:542px;width:1px;height:80px;background:#e0e1e3"></div>
<div class="t" style="left:2086px;width:77px;text-align:right;top:544.5px;font-size:11.5px;color:#333">280 ms</div>
<div class="a" style="left:2243px;top:542px;width:1px;height:80px;background:#e0e1e3"></div>
<div class="t" style="left:2163px;width:77px;text-align:right;top:544.5px;font-size:11.5px;color:#333">290 ms</div>
<div class="a" style="left:2321px;top:542px;width:1px;height:80px;background:#e0e1e3"></div>
<div class="t" style="left:2241px;width:77px;text-align:right;top:544.5px;font-size:11.5px;color:#333">300 ms</div>
<div class="a" style="left:2398px;top:542px;width:1px;height:80px;background:#e0e1e3"></div>
<div class="t" style="left:2318px;width:77px;text-align:right;top:544.5px;font-size:11.5px;color:#333">310 ms</div>
<div class="a" style="left:2475px;top:542px;width:1px;height:80px;background:#e0e1e3"></div>
<div class="t" style="left:2395px;width:77px;text-align:right;top:544.5px;font-size:11.5px;color:#333">320 ms</div>
<div class="a" style="left:2553px;top:542px;width:1px;height:80px;background:#e0e1e3"></div>
<div class="t" style="left:2473px;width:77px;text-align:right;top:544.5px;font-size:11.5px;color:#333">330 ms</div>
<div class="a" style="left:0;top:542px;width:2px;height:18px;background:#9a9a9a"></div>
<div class="a" style="left:0;top:561px;width:1px;height:61px;background:#c5cfe0"></div>
<div class="a" style="left:2557px;top:542px;width:2px;height:18px;background:#9a9a9a"></div>
<div class="a" style="left:2px;top:569px;width:816px;height:8px;background:#fff"></div>
<div class="a" style="left:4px;top:570px;width:2px;height:2.3px;background:#aaa"></div>
<div class="a" style="left:7px;top:570px;width:659px;height:2.3px;background:#4caa5a"></div>
<div class="a" style="left:667px;top:570px;width:4px;height:2.3px;background:#4a9be0"></div>
<div class="a" style="left:9px;top:573px;width:4px;height:2.8px;background:#999"></div>
<div class="a" style="left:16px;top:573px;width:653px;height:2.8px;background:#4caa5a"></div>
<div class="a" style="left:669px;top:573px;width:148px;height:2.8px;background:#4497dd"></div>
<div class="a" style="left:1369px;top:568.5px;width:906px;height:9.5px;background:#4aa253;border:2px solid #3872d8"></div>
<div class="a" style="left:1371px;top:571px;width:5px;height:5.5px;background:#fff"></div>
<div class="a" style="left:1376px;top:571px;width:2px;height:5.5px;background:#999"></div>
<div class="a" style="left:0;top:622px;width:2560px;height:1px;background:#cacdd1"></div>
<div class="a" style="left:0;top:623px;width:1px;height:348px;background:#cacdd1"></div>
<div class="a" style="left:1px;top:623px;width:639px;height:27px;background:#f1f3f4"></div>
<div class="a" style="left:1px;top:650px;width:639px;height:1px;background:#cacdd1"></div>
<div class="a" style="left:1px;top:651px;width:639px;height:320px;background:#fff"></div>
<div class="a" style="left:1px;top:651px;width:639px;height:21px;background:#f3f3f3"></div>
<div class="a" style="left:1px;top:693px;width:639px;height:21px;background:#dcdee1"></div>
<div class="t" style="left:5.5px;top:628px;font-size:11.5px;color:#333;">Name</div>
<div class="a" style="left:9px;top:656px;width:10px;height:11.5px;border:1px solid #6c6c6c;border-radius:1px"></div>
<div class="t" style="left:26.5px;top:652.5px;font-size:11.5px;color:#222;">overview</div>
<div class="a" style="left:9px;top:677px;width:10px;height:11.5px;border:1px solid #6c6c6c;border-radius:1px"></div>
<div class="t" style="left:26.5px;top:673.5px;font-size:11.5px;color:#222;">protocol</div>
<div class="a" style="left:9px;top:698px;width:10px;height:11.5px;border:1px solid #6c6c6c;border-radius:1px"></div>
<div class="t" style="left:26.5px;top:694.5px;font-size:11.5px;color:#222;">throughput</div>
<div class="a" style="left:640px;top:623px;width:1px;height:348px;background:#cacdd1"></div>
<div class="a" style="left:641px;top:623px;width:1919px;height:27px;background:#f1f3f4"></div>
<div class="a" style="left:641px;top:649px;width:1919px;height:1px;background:#cacdd1"></div>
<svg style="left:650.5px;top:632px" width="8" height="8" viewBox="0 0 8 8" stroke="#5f6368" stroke-width="1.1"><path d="M0.5 0.5L7.5 7.5M7.5 0.5L0.5 7.5"/></svg>
<div class="t" style="left:674.5px;top:627px;font-size:11.5px;color:#5f6368;">Headers</div>
<div class="t" style="left:738px;top:627px;font-size:11.5px;color:#202124;">Payload</div>
<div class="t" style="left:798.5px;top:627px;font-size:11.5px;color:#5f6368;">Preview</div>
<div class="t" style="left:859px;top:627px;font-size:11.5px;color:#5f6368;">Response</div>
<div class="t" style="left:928.5px;top:627px;font-size:11.5px;color:#5f6368;">Initiator</div>
<div class="t" style="left:990px;top:627px;font-size:11.5px;color:#5f6368;">Timing</div>
<div class="t" style="left:1045.5px;top:627px;font-size:11.5px;color:#5f6368;">Cookies</div>
<div class="a" style="left:728px;top:647px;width:61px;height:2px;background:#1a73e8"></div>
<div class="a" style="left:641px;top:650px;width:1919px;height:321px;background:#fff"></div>
<svg style="left:647px;top:661.5px" width="8" height="7" viewBox="0 0 8 7"><path d="M0 0H7.5L3.75 6.5Z" fill="#5f6368"/></svg>
<div class="t" style="left:657.5px;top:656px;font-size:11.5px;color:#202124;font-weight:bold">Request Payload</div>
<div class="t" style="left:780px;top:656px;font-size:11.5px;color:#202124;">view source</div>
<svg style="left:657px;top:685px" width="8" height="7" viewBox="0 0 8 7"><path d="M0 0H7.5L3.75 6.5Z" fill="#5f6368"/></svg>
<div class="t mono" style="left:667.3px;top:681.0px"><span style="color:#303942">{refuseCode: true, clientId: "",…}</span></div>
<div class="t mono" style="left:676.6px;top:699.5px"><span style="color:#881391">clientId</span><span style="color:#303942">: </span><span style="color:#c41a16">""</span></div>
<svg style="left:667px;top:720px" width="8" height="7" viewBox="0 0 8 7"><path d="M0 0H7.5L3.75 6.5Z" fill="#5f6368"/></svg>
<div class="t mono" style="left:676.6px;top:716.0px"><span style="color:#881391">query</span><span style="color:#303942">: {queryType: "protocolDataRateSummary", dataSource: "traffic_protocol_stat_log",…}</span></div>
<div class="t mono" style="left:686.5px;top:732.5px"><span style="color:#881391">dataSource</span><span style="color:#303942">: </span><span style="color:#c41a16">"traffic_protocol_stat_log"</span></div>
<svg style="left:678px;top:752.5px" width="7" height="8" viewBox="0 0 7 8"><path d="M0 0V7.5L6.5 3.75Z" fill="#5f6368"/></svg>
<div class="t mono" style="left:687px;top:749.0px"><span style="color:#881391">parameters</span><span style="color:#303942">: {granularity: "PT300S", intervals: ["2022-11-17T01:38:00Z/2022-11-17T01:40:00Z"],…}</span></div>
<div class="t mono" style="left:686.5px;top:766.0px"><span style="color:#881391">queryType</span><span style="color:#303942">: </span><span style="color:#c41a16">"protocolDataRateSummary"</span></div>
<div class="t mono" style="left:676.6px;top:783.0px"><span style="color:#881391">refuseCode</span><span style="color:#303942">: </span><span style="color:#1a1aa6">true</span></div>
<div class="t mono" style="left:676.6px;top:800.0px"><span style="color:#881391">vsysId</span><span style="color:#303942">: </span><span style="color:#1a1aa6">1</span></div>
<div class="a" style="left:641px;top:820px;width:1919px;height:1px;background:#cacdd1"></div>
<div class="a" style="left:671px;top:742px;width:683px;height:32px;border:3px solid #fe1410;border-radius:4px"></div>
</body></html>
